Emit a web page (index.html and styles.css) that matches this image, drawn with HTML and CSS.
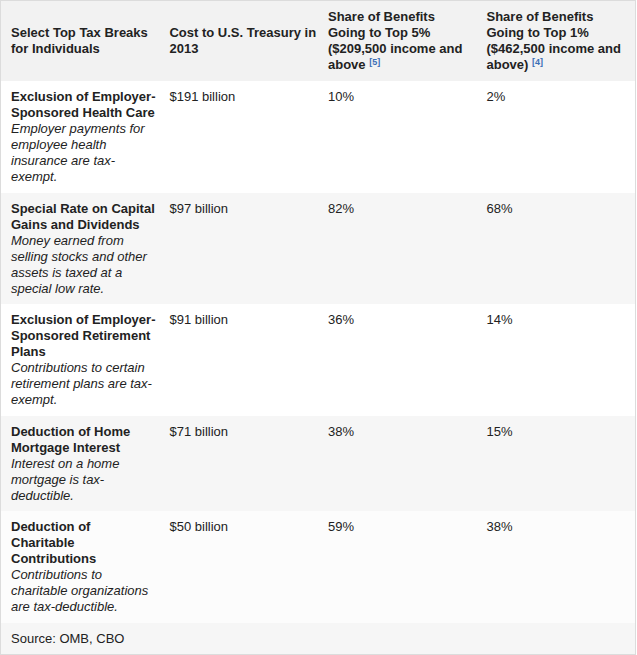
FILE: index.html
```html
<!DOCTYPE html>
<html>
<head>
<meta charset="utf-8">
<link rel="stylesheet" href="styles.css">
</head>
<body>
<table class="tax">
  <thead>
    <tr class="head">
      <th>Select Top Tax Breaks<br>for Individuals</th>
      <th>Cost to U.S. Treasury in<br>2013</th>
      <th>Share of Benefits<br>Going to Top 5%<br>($209,500 income and<br>above <sup class="ref">[5]</sup></th>
      <th>Share of Benefits<br>Going to Top 1%<br>($462,500 income and<br>above) <sup class="ref">[4]</sup></th>
    </tr>
  </thead>
  <tbody>
    <tr class="light">
      <td><strong>Exclusion of Employer-<br>Sponsored Health Care</strong><br><em>Employer payments for<br>employee health<br>insurance are tax-<br>exempt.</em></td>
      <td>$191 billion</td>
      <td>10%</td>
      <td>2%</td>
    </tr>
    <tr class="shade">
      <td><strong>Special Rate on Capital<br>Gains and Dividends</strong><br><em>Money earned from<br>selling stocks and other<br>assets is taxed at a<br>special low rate.</em></td>
      <td>$97 billion</td>
      <td>82%</td>
      <td>68%</td>
    </tr>
    <tr class="light">
      <td><strong>Exclusion of Employer-<br>Sponsored Retirement<br>Plans</strong><br><em>Contributions to certain<br>retirement plans are tax-<br>exempt.</em></td>
      <td>$91 billion</td>
      <td>36%</td>
      <td>14%</td>
    </tr>
    <tr class="shade">
      <td><strong>Deduction of Home<br>Mortgage Interest</strong><br><em>Interest on a home<br>mortgage is tax-<br>deductible.</em></td>
      <td>$71 billion</td>
      <td>38%</td>
      <td>15%</td>
    </tr>
    <tr class="light last">
      <td><strong>Deduction of<br>Charitable<br>Contributions</strong><br><em>Contributions to<br>charitable organizations<br>are tax-deductible.</em></td>
      <td>$50 billion</td>
      <td>59%</td>
      <td>38%</td>
    </tr>
    <tr class="shade source">
      <td colspan="4">Source: OMB, CBO</td>
    </tr>
  </tbody>
</table>
</body>
</html>
```

FILE: styles.css
```css
html, body {
  margin: 0;
  padding: 0;
  background: #ffffff;
}

.tax {
  width: 636px;
  border-collapse: collapse;
  table-layout: fixed;
  border: 1px solid #dcdcdc;
  font-family: "Liberation Sans", Arial, Helvetica, sans-serif;
  font-size: 13px;
  line-height: 16px;
  color: #222222;
}

.tax th,
.tax td {
  padding: 8px 2px 7.5px 10px;
  text-align: left;
  vertical-align: top;
  width: 25%;
  white-space: nowrap;
}

.tax th {
  font-weight: bold;
  vertical-align: middle;
  padding: 8px 2px 8px 10px;
}

.head {
  background: #f2f2f2;
}

.light {
  background: #ffffff;
}

.last {
  background: #fcfcfc;
}

.shade {
  background: #f6f6f6;
}

.tax strong {
  font-weight: bold;
}

.tax em {
  font-style: italic;
}

.ref {
  font-size: 9px;
  line-height: 0;
  vertical-align: 4px;
  color: #3b6fb6;
  font-weight: bold;
}
```
